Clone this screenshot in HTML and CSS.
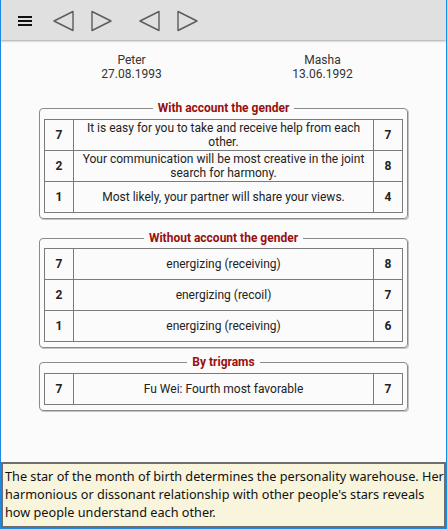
FILE: index.html
```html
<!DOCTYPE html>
<html>
<head>
<meta charset="utf-8">
<link rel="stylesheet" href="styles.css">
</head>
<body>
<div class="window">
  <div class="toolbar">
    <div class="menu"><span></span><span></span><span></span></div>
    <svg class="tri first" width="24" height="22" viewBox="0 0 24 22"><path d="M21 1.5 L21 20.5 L2 11 Z" fill="none" stroke="#5c5c5c" stroke-width="1.4" stroke-linejoin="round"/></svg>
    <svg class="tri" width="24" height="22" viewBox="0 0 24 22"><path d="M2 1.5 L2 20.5 L21 11 Z" fill="none" stroke="#5c5c5c" stroke-width="1.4" stroke-linejoin="round"/></svg>
    <svg class="tri gap" width="24" height="22" viewBox="0 0 24 22"><path d="M21 1.5 L21 20.5 L2 11 Z" fill="none" stroke="#5c5c5c" stroke-width="1.4" stroke-linejoin="round"/></svg>
    <svg class="tri" width="24" height="22" viewBox="0 0 24 22"><path d="M2 1.5 L2 20.5 L21 11 Z" fill="none" stroke="#5c5c5c" stroke-width="1.4" stroke-linejoin="round"/></svg>
  </div>
  <div class="content">
    <div class="persons">
      <div class="person"><div>Peter</div><div>27.08.1993</div></div>
      <div class="person"><div>Masha</div><div>13.06.1992</div></div>
    </div>
    <fieldset class="group g1">
      <legend>With account the gender</legend>
      <table>
        <tr><td class="num">7</td><td class="txt">It is easy for you to take and receive help from each other.</td><td class="num">7</td></tr>
        <tr><td class="num">2</td><td class="txt">Your communication will be most creative in the joint search for harmony.</td><td class="num">8</td></tr>
        <tr><td class="num">1</td><td class="txt">Most likely, your partner will share your views.</td><td class="num">4</td></tr>
      </table>
    </fieldset>
    <fieldset class="group g2">
      <legend>Without account the gender</legend>
      <table>
        <tr><td class="num">7</td><td class="txt">energizing (receiving)</td><td class="num">8</td></tr>
        <tr><td class="num">2</td><td class="txt">energizing (recoil)</td><td class="num">7</td></tr>
        <tr><td class="num">1</td><td class="txt">energizing (receiving)</td><td class="num">6</td></tr>
      </table>
    </fieldset>
    <fieldset class="group g3">
      <legend>By trigrams</legend>
      <table>
        <tr><td class="num">7</td><td class="txt">Fu Wei: Fourth most favorable</td><td class="num">7</td></tr>
      </table>
    </fieldset>
  </div>
  <div class="info">The star of the month of birth determines the personality warehouse. Her harmonious or dissonant relationship with other people's stars reveals how people understand each other.</div>
</div>
</body>
</html>
```
FILE: styles.css
```css
html, body {
  margin: 0;
  padding: 0;
}
body {
  font-family: Roboto, "Liberation Sans", sans-serif;
  background: #fafafa;
}
.window {
  width: 447px;
  height: 529px;
  box-sizing: border-box;
  border-left: 1px solid #1e88e5;
  border-right: 1px solid #1e88e5;
  border-bottom: 1px solid #1e88e5;
  display: flex;
  flex-direction: column;
  background: #fbfbfb;
  overflow: hidden;
}
.toolbar {
  height: 40px;
  flex: none;
  background: #e0e0e0;
  box-shadow: 0 1px 2px rgba(0,0,0,0.35);
  display: flex;
  align-items: center;
  padding-left: 17px;
  position: relative;
  z-index: 1;
}
.menu {
  width: 14px;
  display: flex;
  flex-direction: column;
  gap: 2px;
  margin-top: 2px;
}
.menu span {
  display: block;
  height: 2px;
  background: #111;
}
.tri {
  display: block;
  margin-left: 14px;
  margin-top: 2px;
}
.tri.first {
  margin-left: 20px;
}
.tri.gap {
  margin-left: 24px;
}
.content {
  flex: 1;
  padding-top: 53px;
}
.persons {
  display: flex;
  margin-left: 35px;
  margin-top: -40px;
}
.person {
  width: 191px;
  text-align: center;
  font-size: 12px;
  line-height: 14px;
  color: #333;
}
.group {
  margin: 0 38px 0 38px;
  border: 1px solid #8a8a8a;
  border-radius: 4px;
  box-shadow: 1px 1px 0 #c4c4c4;
  padding: 4px 4px 5px 4px;
  min-width: 0;
}
.group legend {
  margin: 0 auto;
  padding: 0 5px;
  font-size: 12px;
  line-height: 14px;
  font-weight: bold;
  color: #990f0f;
}
.g1 { margin-top: 20px; }
.g2 { margin-top: 12px; padding-top: 3px; }
.g3 { margin-top: 7px; padding-top: 4px; }
table {
  width: 100%;
  border-collapse: collapse;
  border: 1px solid #7a7a7a;
}
td {
  border: 1px solid #7a7a7a;
  height: 30px;
  padding: 0 3px;
  text-align: center;
  font-size: 12px;
  line-height: 14px;
  color: #222;
}
td.num {
  width: 22px;
  font-weight: bold;
}
.info {
  flex: none;
  height: 66px;
  box-sizing: border-box;
  border: 2px solid #6e6e6e;
  background: #f8f5dc;
  padding: 3px 0 0 2px;
  font-family: "Noto Sans", "Open Sans", sans-serif;
  font-size: 12.7px;
  line-height: 18px;
  color: #111;
}
```
